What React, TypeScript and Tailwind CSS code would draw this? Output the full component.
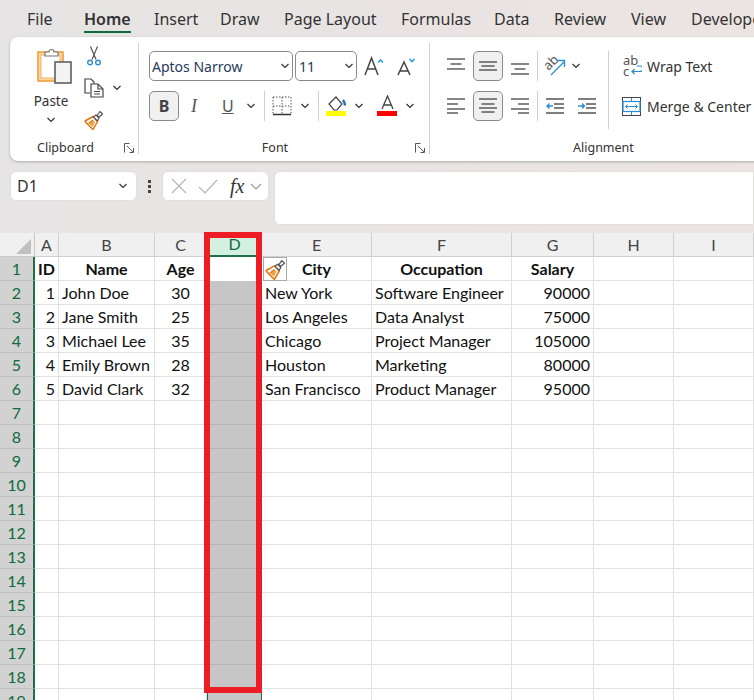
const TABS = [
  { label: "File", w: "w-[57px]" },
  { label: "Home", w: "w-[70px]" },
  { label: "Insert", w: "w-[66px]" },
  { label: "Draw", w: "w-[64px]" },
  { label: "Page Layout", w: "w-[117px]" },
  { label: "Formulas", w: "w-[93px]" },
  { label: "Data", w: "w-[60px]" },
  { label: "Review", w: "w-[77px]" },
  { label: "View", w: "w-[60px]" },
  { label: "Developer", w: "w-[90px]" },
];

const COLUMNS = ["A", "B", "C", "D", "E", "F", "G", "H", "I"];

const ROWS = [
  ["ID", "Name", "Age", "", "City", "Occupation", "Salary"],
  ["1", "John Doe", "30", "", "New York", "Software Engineer", "90000"],
  ["2", "Jane Smith", "25", "", "Los Angeles", "Data Analyst", "75000"],
  ["3", "Michael Lee", "35", "", "Chicago", "Project Manager", "105000"],
  ["4", "Emily Brown", "28", "", "Houston", "Marketing", "80000"],
  ["5", "David Clark", "32", "", "San Francisco", "Product Manager", "95000"],
];

function Chevron({ className = "" }: { className?: string }) {
  return (
    <svg width="10" height="6" viewBox="0 0 10 6" className={className} fill="none" stroke="#333" strokeWidth="1.2">
      <path d="M1.5 1 5 4.5 8.5 1" />
    </svg>
  );
}

function Lines({ rows }: { rows: [number, number, string?][] }) {
  return (
    <svg width="18" height="18" viewBox="0 0 18 18" stroke="#444" strokeWidth="1.3" fill="none">
      {rows.map(([y, w, align], i) => {
        const x = align === "c" ? (18 - w) / 2 : align === "r" ? 18 - w : 0;
        return <path key={i} d={`M${x} ${y}h${w}`} />;
      })}
    </svg>
  );
}

function Launcher() {
  return (
    <svg width="10" height="10" viewBox="0 0 10 10" fill="none" stroke="#555" strokeWidth="1">
      <path d="M.5 9.5v-9h5M3 3l6 6M9.5 5v4.500h-4" />
    </svg>
  );
}

function Brush({ size = 20 }: { size?: number }) {
  return (
    <svg width={size} height={size} viewBox="0 0 20 20" fill="none">
      {/* broom */}
      <path d="M1 11 9 6.500l4.500 5L9 19.500 2 12.500z" fill="#fff" stroke="#e8740c" strokeWidth="1.500" strokeLinejoin="round" />
      <path d="M5 13.500l3.500 3.500 2.500-5-2.500-2z" fill="#f4a04c" />
      <path d="M4.500 13.500 9 10" stroke="#e8740c" strokeWidth="1.200" />
      {/* handle */}
      <path d="M9.500 7 12 5l3 3-1.500 3zM13 5.500l3-4 2.500 2.500-3.500 3z" fill="#fff" stroke="#555" strokeWidth="1.200" strokeLinejoin="round" />
    </svg>
  );
}

function PasteIcon() {
  return (
    <svg width="36" height="40" viewBox="0 0 36 40" fill="none">
      <rect x="1" y="6" width="25" height="29" fill="#fbd9a6" stroke="#ee9b35" strokeWidth="1.500" />
      <rect x="4" y="9" width="19" height="23" fill="#fff" stroke="#f2b066" strokeWidth="1" />
      <path d="M8 10V6h4a2.500 2.500 0 0 1 5 0h4v4z" fill="#fff" stroke="#777" strokeWidth="1.200" />
      <rect x="18" y="16" width="16" height="21" fill="#f4f4f4" stroke="#555" strokeWidth="1.500" />
    </svg>
  );
}

function CutIcon() {
  return (
    <svg width="14" height="20" viewBox="0 0 14 20" fill="none">
      <path d="M3.500 .5l5.500 13M10.500 .5 5 13.500" stroke="#555" strokeWidth="1.200" />
      <circle cx="3" cy="16.500" r="2.300" stroke="#2a8dd4" strokeWidth="1.400" />
      <circle cx="11" cy="16.500" r="2.300" stroke="#2a8dd4" strokeWidth="1.400" />
    </svg>
  );
}

function CopyIcon() {
  return (
    <svg width="20" height="20" viewBox="0 0 20 20" fill="none" stroke="#444" strokeWidth="1.200">
      <path d="M6 15H1V1h6l3 3v2" />
      <path d="M7 6h7l5 5v8H7z" fill="#fff" />
      <path d="M14 6v5h5M10 13.500h6M10 16h6" />
    </svg>
  );
}

function Borders() {
  return (
    <svg width="20" height="20" viewBox="0 0 20 20" fill="none">
      <path d="M1 1h18M1 1v18M19 1v18M10 1v18M1 10h18" stroke="#555" strokeWidth="1" strokeDasharray="1.500 1.500" />
      <path d="M1 18.500h18" stroke="#333" strokeWidth="1.500" />
    </svg>
  );
}

function FillColor() {
  return (
    <svg width="21" height="22" viewBox="0 0 21 22" fill="none">
      <path d="M3 9 10 2l6 7-5 6H8z" fill="#fff" stroke="#444" strokeWidth="1.200" />
      <path d="M17 5c1.500 2 2 4 2 5.500" stroke="#1f6fb5" strokeWidth="2.400" />
      <rect y="16" width="20" height="5" fill="#ffff00" />
    </svg>
  );
}

function FontColor() {
  return (
    <svg width="21" height="22" viewBox="0 0 21 22" fill="none">
      <path d="M5 14 10.500 1 16 14M7 10h7" stroke="#444" strokeWidth="1.300" />
      <rect y="16" width="20" height="5" fill="#ff0000" />
    </svg>
  );
}

function GrowFont({ shrink }: { shrink?: boolean }) {
  return (
    <svg width="20" height="20" viewBox="0 0 20 20" fill="none">
      {shrink ? (
        <>
          <path d="M1 19 7 6l6 13M3 15h8" stroke="#444" strokeWidth="1.500" />
          <path d="M12.500 3 15 5.500 17.500 3" stroke="#2a9fe0" strokeWidth="1.600" />
        </>
      ) : (
        <>
          <path d="M1 19 7.500 2 14 19M3.500 13h8" stroke="#444" strokeWidth="1.500" />
          <path d="M14 6.500 16.500 4 19 6.500" stroke="#2a9fe0" strokeWidth="1.600" />
        </>
      )}
    </svg>
  );
}

function Orientation() {
  return (
    <svg width="22" height="20" viewBox="0 0 22 20" fill="none">
      <text x="0" y="12" fontSize="13" fill="#555" transform="rotate(-45 6 8)" fontFamily="Noto Sans, sans-serif">ab</text>
      <path d="M7 19 20 6M14 4.500h6.500V11" stroke="#2a8dd4" strokeWidth="1.300" />
    </svg>
  );
}

function Indent({ right }: { right?: boolean }) {
  return (
    <svg width="18" height="18" viewBox="0 0 18 18" fill="none">
      <path d="M0 2h18M8 7h10M8 11h10M0 16h18" stroke="#555" strokeWidth="1.300" />
      {right ? (
        <path d="M0 9h6M4 6.500 6.500 9 4 11.500" stroke="#2a8dd4" strokeWidth="1.400" />
      ) : (
        <path d="M1 9h6M3.500 6.500 1 9l2.500 2.500" stroke="#2a8dd4" strokeWidth="1.400" />
      )}
    </svg>
  );
}

function Merge() {
  return (
    <svg width="19" height="19" viewBox="0 0 19 19" fill="none">
      <rect x=".5" y=".5" width="18" height="18" stroke="#444" strokeWidth="1" />
      <rect x="1" y="4.500" width="17" height="10" fill="#fff" stroke="#2a8dd4" strokeWidth="1.200" />
      <path d="M3.500 9.500h12M5.500 7.500l-2 2 2 2M13.500 7.500l2 2-2 2M9.500 1v3M9.500 15v3" stroke="#2a8dd4" strokeWidth="1" />
    </svg>
  );
}

function PressedBtn({ children }: { children: React.ReactNode }) {
  return (
    <div className="w-[30px] h-[30px] flex items-center justify-center rounded-[5px] border border-[#8a8a8a] bg-[#f0f0f0]">
      {children}
    </div>
  );
}

function Ribbon() {
  return (
    <div className="relative mx-[10px] mr-[-20px] h-[124px] flex rounded-lg bg-white shadow-[0_1px_3px_rgba(0,0,0,0.25)] text-[#333] text-[12.500px]">
      {/* Clipboard */}
      <div className="relative w-[129px] shrink-0 flex flex-col">
        <div className="flex h-[97px] pt-[9px] pl-[23px]">
          <div className="w-[36px] flex flex-col items-center">
            <div className="self-start ml-[4px]"><PasteIcon /></div>
            <span className="text-[13.500px] leading-5 mt-[5px]">Paste</span>
            <Chevron className="mt-[6px]" />
          </div>
          <div className="ml-[15px] flex flex-col gap-[12px]">
            <div className="ml-[3px]"><CutIcon /></div>
            <div className="flex items-center gap-[8px]"><CopyIcon /><Chevron /></div>
            <Brush />
          </div>
        </div>
        <div className="flex items-center pl-[27px] pr-[5px] mt-[5px] h-[18px]">
          <span className="flex-1">Clipboard</span>
          <Launcher />
        </div>
        <div className="absolute right-0 top-[6px] bottom-[7px] w-px bg-[#d0d0d0]" />
      </div>

      {/* Font */}
      <div className="relative w-[291px] shrink-0 flex flex-col pl-[10px] pt-[14px]">
        <div className="flex items-center h-[30px]">
          <div className="w-[144px] h-[30px] flex items-center justify-between pl-[2px] pr-[2px] rounded-[5px] border border-[#8a8a8a] text-[14px] text-[#1f3a5c]">
            <span>Aptos Narrow</span>
            <Chevron />
          </div>
          <div className="w-[62px] h-[30px] ml-[2px] flex items-center justify-between pl-[3px] pr-[2px] rounded-[5px] border border-[#8a8a8a] text-[14px] text-[#1f3a5c]">
            <span>11</span>
            <Chevron />
          </div>
          <div className="ml-[7px]"><GrowFont /></div>
          <div className="ml-[13px]"><GrowFont shrink /></div>
        </div>
        <div className="flex items-center h-[30px] mt-[10px]">
          <PressedBtn><span className="text-[16px] font-bold text-[#444]">B</span></PressedBtn>
          <span className="ml-[12px] w-[12px] text-[18px] italic text-[#555]" style={{ fontFamily: "Liberation Serif, serif" }}>I</span>
          <span className="ml-[19px] w-[14px] text-[16px] underline text-[#555]">U</span>
          <Chevron className="ml-[10px]" />
          <div className="ml-[8px] h-[30px] w-px bg-[#d0d0d0]" />
          <div className="ml-[7px]"><Borders /></div>
          <Chevron className="ml-[8px]" />
          <div className="ml-[8px] h-[30px] w-px bg-[#d0d0d0]" />
          <div className="ml-[7px]"><FillColor /></div>
          <Chevron className="ml-[7px]" />
          <div className="ml-[13px]"><FontColor /></div>
          <Chevron className="ml-[7px]" />
        </div>
        <div className="flex items-center mt-[18px] h-[18px] pr-[5px]">
          <span className="flex-1 text-center pr-[14px]">Font</span>
          <Launcher />
        </div>
        <div className="absolute right-0 top-[6px] bottom-[7px] w-px bg-[#d0d0d0]" />
      </div>

      {/* Alignment */}
      <div className="relative flex flex-col pl-[17px] pt-[14px] w-[400px]">
        <div className="flex items-center h-[30px]">
          <Lines rows={[[2, 18], [7, 11, "c"], [12, 18]]} />
          <div className="ml-[8px]"><PressedBtn><Lines rows={[[5, 18], [9, 13, "c"], [13, 18]]} /></PressedBtn></div>
          <div className="ml-[8px]"><Lines rows={[[7, 18], [12, 11, "c"], [17, 18]]} /></div>
          <div className="ml-[8px] h-[30px] w-px bg-[#d0d0d0]" />
          <div className="ml-[6px]"><Orientation /></div>
          <Chevron className="ml-[5px]" />
          <div className="ml-[27px] h-[78px] w-px bg-[#d0d0d0] self-start" />
          <div className="ml-[14px]">
            <svg width="19" height="22" viewBox="0 0 19 22" fill="none">
              <text x="0" y="10" fontSize="13" fill="#555" fontFamily="Noto Sans, sans-serif">ab</text>
              <text x="0" y="21" fontSize="13" fill="#555" fontFamily="Noto Sans, sans-serif">c</text>
              <path d="M14 11h3a2 2 0 0 1 0 5.500H9M11.500 14 9 16.500 11.500 19" stroke="#2a8dd4" strokeWidth="1.200" />
            </svg>
          </div>
          <span className="ml-[5px] text-[14px] whitespace-nowrap">Wrap Text</span>
        </div>
        <div className="flex items-center h-[30px] mt-[10px]">
          <Lines rows={[[2, 18], [7, 11], [12, 18], [16, 11]]} />
          <div className="ml-[8px]"><PressedBtn><Lines rows={[[2, 18], [7, 13, "c"], [11, 18], [15, 13, "c"]]} /></PressedBtn></div>
          <div className="ml-[8px]"><Lines rows={[[2, 18], [7, 11, "r"], [12, 18], [16, 11, "r"]]} /></div>
          <div className="ml-[8px] h-[30px] w-px bg-[#d0d0d0]" />
          <div className="ml-[8px]"><Indent /></div>
          <div className="ml-[14px]"><Indent right /></div>
          <div className="ml-[26px]"><Merge /></div>
          <span className="ml-[6px] text-[14px] whitespace-nowrap">Merge &amp; Center</span>
        </div>
        <div className="mt-[18px] h-[18px] pl-[126px]">Alignment</div>
      </div>
    </div>
  );
}

function FormulaBar() {
  return (
    <div className="flex mt-[10px] h-[54px] pl-[10px] items-start text-[#333]">
      <div className="w-[127px] h-[30px] flex items-center justify-between pl-[6px] pr-[8px] rounded-md bg-white border border-[#e2dede] text-[16px]">
        <span>D1</span>
        <Chevron />
      </div>
      <div className="w-[25px] h-[30px] flex flex-col items-center justify-center gap-[2px]">
        <i className="w-[3px] h-[3px] bg-[#444]" />
        <i className="w-[3px] h-[3px] bg-[#444]" />
        <i className="w-[3px] h-[3px] bg-[#444]" />
      </div>
      <div className="w-[107px] h-[30px] flex items-center pl-[8px] rounded-md bg-white border border-[#e2dede]">
        <svg width="16" height="16" viewBox="0 0 16 16" stroke="#b5b5b5" strokeWidth="1.200" fill="none">
          <path d="M1 1l14 14M15 1 1 15" />
        </svg>
        <svg width="20" height="15" viewBox="0 0 20 15" className="ml-[11px]" stroke="#b5b5b5" strokeWidth="1.200" fill="none">
          <path d="M1 8l6 6L19 1" />
        </svg>
        <span className="ml-[12px] text-[20px] italic text-[#333] leading-none" style={{ fontFamily: "Liberation Serif, serif" }}>fx</span>
        <svg width="12" height="7" viewBox="0 0 12 7" className="ml-[6px]" stroke="#999" strokeWidth="1.200" fill="none">
          <path d="M1 1l5 5 5-5" />
        </svg>
      </div>
      <div className="ml-[5px] flex-1 h-[54px] rounded-l-md bg-white border border-[#e2dede]" />
    </div>
  );
}

function cellAlign(row: number, col: number) {
  if (row === 0) return "justify-center font-bold";
  if (col === 0 || col === 6) return "justify-end";
  if (col === 2) return "justify-center";
  return "justify-start";
}

function Sheet() {
  const rowNumbers = Array.from({ length: 19 }, (_, i) => i + 1);
  return (
    <div
      className="grid grid-cols-[35px_24px_96px_52px_55px_110px_140px_82px_80px_80px] auto-rows-[24px] bg-white text-[16px] text-[#111]"
      style={{ fontFamily: "Lato, sans-serif" }}
    >
      {/* corner + column letters */}
      <div className="relative bg-[#f0f0f0] border-r border-b border-[#c8c8c8]">
        <div className="absolute right-[3px] bottom-[2px] w-0 h-0 border-l-[15px] border-l-transparent border-b-[15px] border-b-[#c0c0c0]" />
      </div>
      {COLUMNS.map((c) => (
        <div
          key={c}
          className={
            c === "D"
              ? "flex items-center justify-center bg-[#d3f0e0] border-b-2 border-[#1e7145] text-[#0f6b3c]"
              : "flex items-center justify-center bg-[#f0f0f0] border-r border-b border-[#d0d0d0] text-[#444]"
          }
        >
          {c}
        </div>
      ))}
      {rowNumbers.map((n, r) => (
        <div key={n} className="contents">
          <div className="flex items-center justify-center bg-[#d2d2d2] border-r-2 border-r-[#1e7145] border-b border-b-[#bdbdbd] text-[#0f6b3c]">
            {n}
          </div>
          {COLUMNS.map((c, col) => (
            <div
              key={c}
              className={
                c === "D"
                  ? r === 0
                    ? "bg-white"
                    : "bg-[#c6c6c6] border-b border-[#b4b4b4] border-x border-x-[#1e7145]"
                  : `flex items-center px-[3px] whitespace-nowrap border-r border-b border-[#e1e1e1] ${cellAlign(r, col)}`
              }
            >
              {ROWS[r]?.[col]}
            </div>
          ))}
        </div>
      ))}
    </div>
  );
}

export default function App() {
  return (
    <div className="relative w-[754px] h-[700px] overflow-hidden bg-gradient-to-r from-[#e6e4e4] to-[#ebe4e2]" style={{ fontFamily: "'Noto Sans', sans-serif" }}>
      <div className="flex h-[37px] pl-[27px] items-center text-[16px] text-[#333] whitespace-nowrap">
        {TABS.map((t) => (
          <div key={t.label} className={`${t.w} shrink-0`}>
            <span className={t.label === "Home" ? "relative font-semibold" : ""}>
              {t.label}
              {t.label === "Home" && <i className="absolute left-0 right-0 bottom-[-3px] h-[2px] bg-[#0e6b3e]" />}
            </span>
          </div>
        ))}
      </div>
      <Ribbon />
      <FormulaBar />
      <div className="mt-[8px]">
        <Sheet />
      </div>
      {/* red highlight around column D */}
      <div className="absolute left-[204px] top-[232px] w-[58px] h-[461px] border-[6px] border-[#ee1c25]" />
      {/* format painter paste-options tag */}
      <div className="absolute left-[263px] top-[257px] w-[24px] h-[24px] flex items-center justify-center bg-white border border-[#aaa]">
        <Brush size={21} />
      </div>
    </div>
  );
}
